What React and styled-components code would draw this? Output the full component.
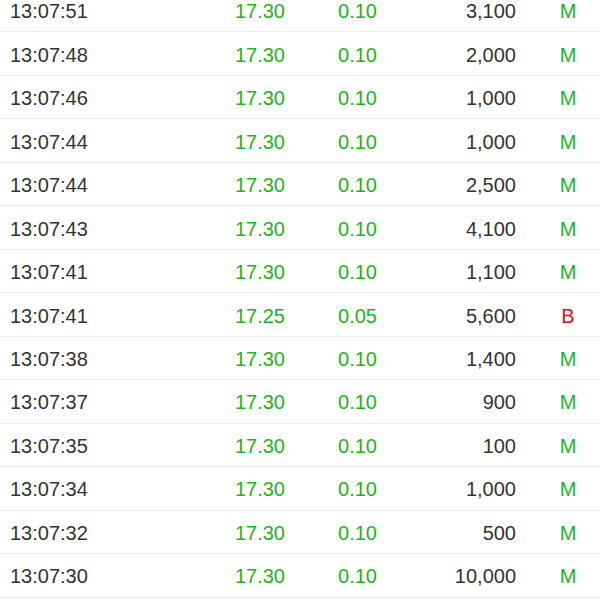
import React from "react";
import styled, { createGlobalStyle } from "styled-components";

const Global = createGlobalStyle`
  html, body { margin: 0; padding: 0; background: #fff; }
  body { font-family: "Liberation Sans", Arial, sans-serif; overflow: hidden; }
`;

const Viewport = styled.div`
  width: 600px;
  height: 600px;
  overflow: hidden;
  background: #fff;
`;

const List = styled.div`
  margin-top: -11px;
`;

const Row = styled.div`
  display: grid;
  grid-template-columns: 175px 100px 92px 139px 84px;
  align-items: center;
  height: 43.48px;
  box-sizing: border-box;
  padding-left: 10px;
  padding-top: 3px;
  border-bottom: 1px solid #ececec;
  font-size: 20px;
`;

const Time = styled.div`
  color: #333;
`;

const Num = styled.div`
  text-align: right;
  color: ${(p) => p.color || "#333"};
`;

const Flag = styled.div`
  padding-left: 20px;
  text-align: center;
  color: ${(p) => (p.type === "B" ? "#c8141e" : "#1eb41e")};
`;

const GREEN = "#1eb41e";

const rows = [
  ["13:07:51", "17.30", "0.10", "3,100", "M"],
  ["13:07:48", "17.30", "0.10", "2,000", "M"],
  ["13:07:46", "17.30", "0.10", "1,000", "M"],
  ["13:07:44", "17.30", "0.10", "1,000", "M"],
  ["13:07:44", "17.30", "0.10", "2,500", "M"],
  ["13:07:43", "17.30", "0.10", "4,100", "M"],
  ["13:07:41", "17.30", "0.10", "1,100", "M"],
  ["13:07:41", "17.25", "0.05", "5,600", "B"],
  ["13:07:38", "17.30", "0.10", "1,400", "M"],
  ["13:07:37", "17.30", "0.10", "900", "M"],
  ["13:07:35", "17.30", "0.10", "100", "M"],
  ["13:07:34", "17.30", "0.10", "1,000", "M"],
  ["13:07:32", "17.30", "0.10", "500", "M"],
  ["13:07:30", "17.30", "0.10", "10,000", "M"],
];

export default function App() {
  return (
    <Viewport>
      <Global />
      <List>
        {rows.map(([t, p, c, v, f], i) => (
          <Row key={i}>
            <Time>{t}</Time>
            <Num color={GREEN}>{p}</Num>
            <Num color={GREEN}>{c}</Num>
            <Num>{v}</Num>
            <Flag type={f}>{f}</Flag>
          </Row>
        ))}
      </List>
    </Viewport>
  );
}
